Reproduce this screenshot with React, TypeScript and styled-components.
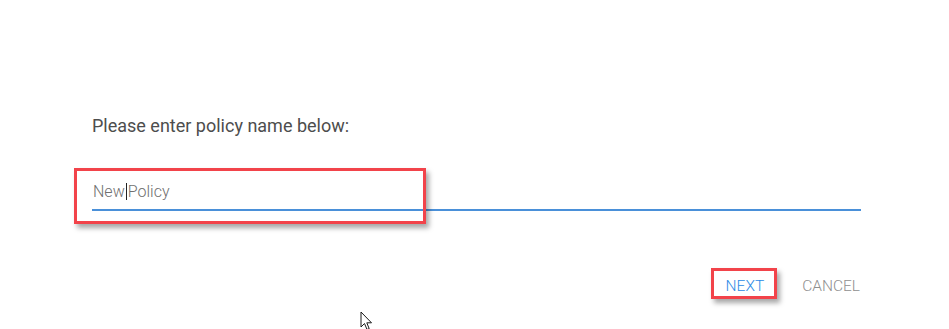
import React from "react";
import styled, { createGlobalStyle } from "styled-components";

const GlobalStyle = createGlobalStyle`
  html, body { margin: 0; padding: 0; background: #ffffff; }
  body { font-family: Roboto, "Liberation Sans", Arial, sans-serif; }
`;

const Page = styled.div`
  position: relative;
  width: 949px;
  height: 329px;
  box-sizing: border-box;
  padding: 115px 88px 0 92px;
  overflow: hidden;
`;

const Label = styled.div`
  font-size: 18px;
  line-height: 22px;
  color: #4d4d4d;
`;

const Field = styled.div`
  position: relative;
  margin-top: 29px;
  height: 45px;
  box-sizing: border-box;
  padding-top: 16px;
  border-bottom: 2px solid #4a90d9;
  display: flex;
  align-items: flex-start;
  font-size: 16px;
  font-weight: 300;
  line-height: 19px;
  color: #6f6f6f;
`;

const Value = styled.span`
  padding-left: 1px;
  display: inline-flex;
  align-items: center;
`;

const Caret = styled.span`
  display: inline-block;
  width: 1px;
  height: 17px;
  background: #222;
  margin: 0 1px 0 1px;
`;

const Highlight = styled.div<{ $left: number; $top: number; $width: number; $height: number }>`
  position: absolute;
  left: ${(p) => p.$left}px;
  top: ${(p) => p.$top}px;
  width: ${(p) => p.$width}px;
  height: ${(p) => p.$height}px;
  box-sizing: border-box;
  border: 3px solid #f2434a;
  box-shadow: 3px 4px 5px rgba(0, 0, 0, 0.35);
  pointer-events: none;
`;

const Actions = styled.div`
  margin-top: 60px;
  display: flex;
  justify-content: flex-end;
  gap: 6px;
  padding-right: 1px;
`;

const Button = styled.button<{ $primary?: boolean }>`
  position: relative;
  border: none;
  background: transparent;
  padding: 0 16px;
  height: 30px;
  font-family: Roboto, "Liberation Sans", Arial, sans-serif;
  font-size: 15.5px;
  font-weight: 300;
  line-height: 30px;
  text-transform: uppercase;
  color: ${(p) => (p.$primary ? "#2b8ae6" : "#8f8f8f")};
  cursor: pointer;
  &:last-child { padding-right: 0; }
`;

const Pointer = styled.svg`
  position: absolute;
  left: 360px;
  top: 311px;
`;

export default function App() {
  return (
    <>
      <GlobalStyle />
      <Page>
        <Label>Please enter policy name below:</Label>
        <Field>
          <Value>
            New<Caret />Policy
          </Value>
          <Highlight $left={-18} $top={2} $width={352} $height={56} />
        </Field>
        <Actions>
          <Button $primary>
            Next
            <Highlight $left={1} $top={-3} $width={66} $height={31} />
          </Button>
          <Button>Cancel</Button>
        </Actions>
        <Pointer width="14" height="22" viewBox="0 0 14 22">
          <path
            d="M1 1 L1 16 L4.5 12.5 L7 18.5 L9.2 17.6 L6.8 11.8 L11.5 11.8 Z"
            fill="#ffffff"
            stroke="#1a1a1a"
            strokeWidth="1"
            strokeLinejoin="miter"
          />
        </Pointer>
      </Page>
    </>
  );
}
